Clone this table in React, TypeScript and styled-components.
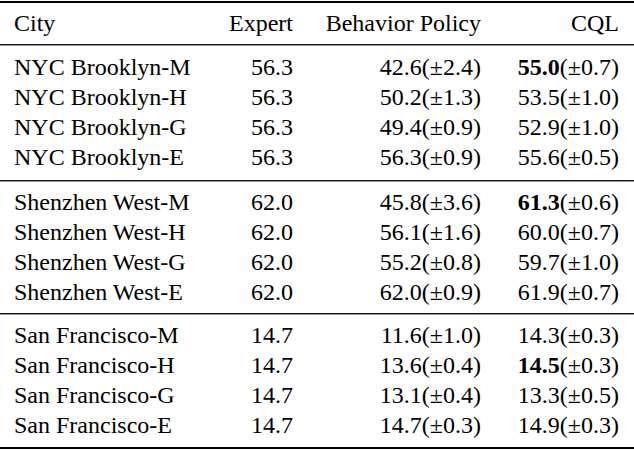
import React from 'react';
import styled, { createGlobalStyle } from 'styled-components';

const GlobalStyle = createGlobalStyle`
  html, body {
    margin: 0;
    padding: 0;
    background: #fff;
  }
`

const TableWrapper = styled.div`
  width: 634px;
  margin-top: 1px;
  border-top: 2px solid #000;
  border-bottom: 2px solid #000;
  font-family: "Liberation Serif", serif;
  font-size: 24px;
  color: #000;
`

const HeaderRow = styled.div`
  display: grid;
  grid-template-columns: 206px 73px 188px 138px;
  height: 30px;
  line-height: 30px;
  padding: 5px 15px 6px 14px;
  border-bottom: 1px solid #111;
  box-shadow: 0 1px 0 #999;
`

const Section = styled.div<{ $last?: boolean }>`
  padding: ${({ $last }) => ($last ? '6px 0 7px' : '6px 0 6px')};
  border-bottom: ${({ $last }) => ($last ? 'none' : '1px solid #111')};
  box-shadow: ${({ $last }) => ($last ? 'none' : '0 1px 0 #999')};
  &:nth-of-type(2) {
    padding-top: 7px;
    padding-bottom: 8px;
  }
`

const Row = styled.div`
  display: grid;
  grid-template-columns: 206px 73px 188px 138px;
  height: 30px;
  line-height: 30px;
  padding: 0 15px 0 14px;
`

const Cell = styled.span<{ $right?: boolean }>`
  white-space: nowrap;
  text-align: ${({ $right }) => ($right ? 'right' : 'left')};
`

const Mean = styled.span<{ $bold?: boolean }>`
  font-weight: ${({ $bold }) => ($bold ? 700 : 400)};
`

type Stat = { m: string; s: string; best?: boolean }
type Entry = { city: string; expert: string; behavior: Stat; cql: Stat }

const groups: Entry[][] = [
    [
        { city: 'NYC Brooklyn-M', expert: '56.3', behavior: { m: '42.6', s: '2.4' }, cql: { m: '55.0', s: '0.7', best: true } },
        { city: 'NYC Brooklyn-H', expert: '56.3', behavior: { m: '50.2', s: '1.3' }, cql: { m: '53.5', s: '1.0' } },
        { city: 'NYC Brooklyn-G', expert: '56.3', behavior: { m: '49.4', s: '0.9' }, cql: { m: '52.9', s: '1.0' } },
        { city: 'NYC Brooklyn-E', expert: '56.3', behavior: { m: '56.3', s: '0.9' }, cql: { m: '55.6', s: '0.5' } },
    ],
    [
        { city: 'Shenzhen West-M', expert: '62.0', behavior: { m: '45.8', s: '3.6' }, cql: { m: '61.3', s: '0.6', best: true } },
        { city: 'Shenzhen West-H', expert: '62.0', behavior: { m: '56.1', s: '1.6' }, cql: { m: '60.0', s: '0.7' } },
        { city: 'Shenzhen West-G', expert: '62.0', behavior: { m: '55.2', s: '0.8' }, cql: { m: '59.7', s: '1.0' } },
        { city: 'Shenzhen West-E', expert: '62.0', behavior: { m: '62.0', s: '0.9' }, cql: { m: '61.9', s: '0.7' } },
    ],
    [
        { city: 'San Francisco-M', expert: '14.7', behavior: { m: '11.6', s: '1.0' }, cql: { m: '14.3', s: '0.3' } },
        { city: 'San Francisco-H', expert: '14.7', behavior: { m: '13.6', s: '0.4' }, cql: { m: '14.5', s: '0.3', best: true } },
        { city: 'San Francisco-G', expert: '14.7', behavior: { m: '13.1', s: '0.4' }, cql: { m: '13.3', s: '0.5' } },
        { city: 'San Francisco-E', expert: '14.7', behavior: { m: '14.7', s: '0.3' }, cql: { m: '14.9', s: '0.3' } },
    ],
]

const StatCell: React.FC<{ stat: Stat }> = ({ stat }) => (
    <Cell $right>
        <Mean $bold={stat.best}>{stat.m}</Mean>(±{stat.s})
    </Cell>
)

const App: React.FC = () => {
    return (
        <>
            <GlobalStyle />
            <TableWrapper>
                <HeaderRow>
                    <Cell>City</Cell>
                    <Cell $right>Expert</Cell>
                    <Cell $right>Behavior Policy</Cell>
                    <Cell $right>CQL</Cell>
                </HeaderRow>
                {groups.map((group, gi) => (
                    <Section key={gi} $last={gi === groups.length - 1}>
                        {group.map((row) => (
                            <Row key={row.city}>
                                <Cell>{row.city}</Cell>
                                <Cell $right>{row.expert}</Cell>
                                <StatCell stat={row.behavior} />
                                <StatCell stat={row.cql} />
                            </Row>
                        ))}
                    </Section>
                ))}
            </TableWrapper>
        </>
    );
}

export default App;
